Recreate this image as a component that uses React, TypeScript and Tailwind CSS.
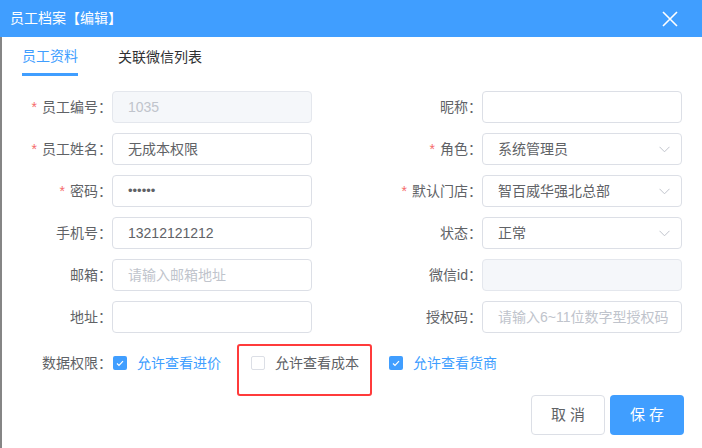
import React from "react";

type Field = {
  label: string;
  required?: boolean;
  value?: string;
  placeholder?: string;
  disabled?: boolean;
  select?: boolean;
  password?: boolean;
};

const rows: [Field, Field][] = [
  [
    { label: "员工编号", required: true, value: "1035", disabled: true },
    { label: "昵称" },
  ],
  [
    { label: "员工姓名", required: true, value: "无成本权限" },
    { label: "角色", required: true, value: "系统管理员", select: true },
  ],
  [
    { label: "密码", required: true, value: "••••••", password: true },
    { label: "默认门店", required: true, value: "智百威华强北总部", select: true },
  ],
  [
    { label: "手机号", value: "13212121212" },
    { label: "状态", value: "正常", select: true },
  ],
  [
    { label: "邮箱", placeholder: "请输入邮箱地址" },
    { label: "微信id", disabled: true },
  ],
  [
    { label: "地址" },
    { label: "授权码", placeholder: "请输入6~11位数字型授权码" },
  ],
];

function Chevron() {
  return (
    <svg width="11" height="7" viewBox="0 0 11 7" fill="none">
      <polyline points="0.5,0.8 5.5,5.8 10.5,0.8" stroke="#C0C4CC" strokeWidth="1" />
    </svg>
  );
}

function FormItem({ field }: { field: Field }) {
  const box = field.disabled
    ? "bg-[#F5F7FA] border-[#E4E7ED] text-[#C0C4CC]"
    : "bg-white border-[#DCDFE6] text-[#606266]";
  return (
    <div className="flex items-center">
      <div className="w-[90px] text-right text-[14px] text-[#606266]">
        {field.required && <span className="mr-[5px] text-[#F56C6C]">*</span>}
        {field.label}：
      </div>
      <div
        className={`flex h-[32px] w-[200px] items-center justify-between rounded-[4px] border pl-[15px] pr-[11px] text-[14px] ${box}`}
      >
        {field.value ? (
          <span className={field.password ? "text-[13px]" : ""}>{field.value}</span>
        ) : (
          <span className="text-[#C0C4CC]">{field.placeholder}</span>
        )}
        {field.select && <Chevron />}
      </div>
    </div>
  );
}

function Checkbox({ checked, label }: { checked: boolean; label: string }) {
  return (
    <div className="mr-[30px] flex items-center">
      {checked ? (
        <span className="flex h-[14px] w-[14px] items-center justify-center rounded-[2px] bg-[#409EFF]">
          <svg width="8" height="7" viewBox="0 0 8 7" fill="none">
            <polyline points="1,3.5 3,5.5 7,1.2" stroke="white" strokeWidth="1.2" />
          </svg>
        </span>
      ) : (
        <span className="h-[14px] w-[14px] rounded-[2px] border border-[#DCDFE6] bg-white" />
      )}
      <span className={`ml-[10px] text-[14px] ${checked ? "text-[#409EFF]" : "text-[#606266]"}`}>{label}</span>
    </div>
  );
}

export default function App() {
  return (
    <div className="relative flex h-[448px] w-[702px] flex-col overflow-hidden bg-white font-['Liberation_Sans','Noto_Sans_CJK_SC',sans-serif]">
      <header className="flex h-[37px] shrink-0 items-center justify-between bg-[#409EFF] pl-[10px] pr-[24px]">
        <span className="text-[14px] text-white">员工档案【编辑】</span>
        <svg width="16" height="16" viewBox="0 0 16 16" fill="none">
          <path d="M1 1L15 15M15 1L1 15" stroke="white" strokeWidth="1.6" />
        </svg>
      </header>

      <div className="flex flex-1">
        <div className="w-[2px] bg-[#858585]" />
        <div className="flex-1 pl-[20px] pr-[18px]">
          <nav className="flex h-[39px] gap-[40px] text-[14px]">
            <div className="flex items-center border-b-[3px] border-[#409EFF] pt-[3px] text-[#409EFF]">员工资料</div>
            <div className="flex items-center pt-[2px] text-[#303133]">关联微信列表</div>
          </nav>

          <div className="mt-[15px] grid grid-cols-[290px_290px] gap-x-[80px] gap-y-[10px]">
            {rows.map(([l, r], i) => (
              <React.Fragment key={i}>
                <FormItem field={l} />
                <FormItem field={r} />
              </React.Fragment>
            ))}
          </div>

          <div className="mt-[10px] flex h-[40px] items-center">
            <div className="w-[90px] text-right text-[14px] text-[#606266]">数据权限：</div>
            <div className="ml-px flex items-center">
              <Checkbox checked label="允许查看进价" />
              <Checkbox checked={false} label="允许查看成本" />
              <Checkbox checked label="允许查看货商" />
            </div>
          </div>

          <div className="mt-[12px] flex justify-end gap-[5px]">
            <button
              type="button"
              className="h-[40px] w-[74px] rounded-[4px] border border-[#DCDFE6] bg-white text-[15px] text-[#606266]"
            >
              取 消
            </button>
            <button type="button" className="h-[40px] w-[74px] rounded-[4px] bg-[#409EFF] text-[15px] text-white">
              保 存
            </button>
          </div>
        </div>
      </div>

      <div className="pointer-events-none absolute left-[237px] top-[344px] h-[52px] w-[135px] rounded-[3px] border-2 border-[#FF3B3B]" />
    </div>
  );
}
